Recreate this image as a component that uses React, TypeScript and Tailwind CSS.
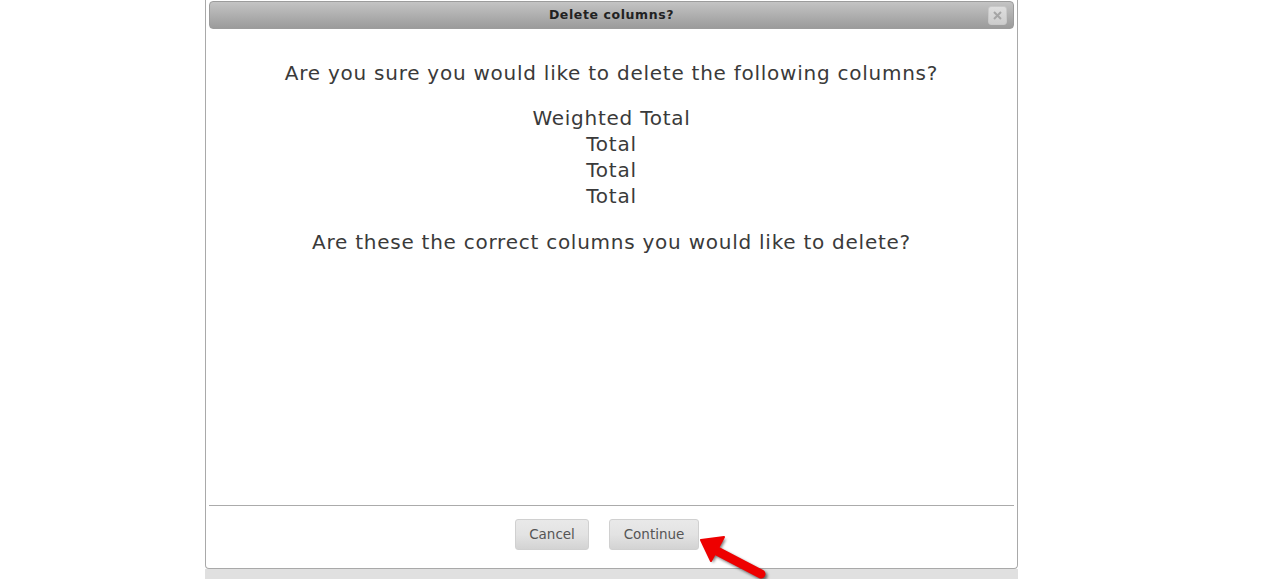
export default function App() {
  const columns = ["Weighted Total", "Total", "Total", "Total"];

  return (
    <div className="relative h-[579px] w-[1262px] overflow-hidden bg-white font-['DejaVu_Sans',Verdana,sans-serif]">
      <div className="ml-[205px] w-[813px]">
        {/* Dialog */}
        <div className="flex h-[569px] flex-col rounded-b-[4px] border border-t-0 border-[#a9a9a9] bg-white px-[3px] pt-px">
          {/* Title bar */}
          <div className="relative flex h-[28px] items-center justify-center rounded-[4px] border border-[#9c9c9c] bg-gradient-to-b from-[#c4c4c4] to-[#9b9b9b]">
            <span className="text-[12.5px] font-bold tracking-[0.6px] text-[#222]">Delete columns?</span>
            <button className="absolute right-[6px] top-[4px] flex h-[19px] w-[19px] items-center justify-center rounded-[3px] border border-[#c8c8c8] bg-gradient-to-b from-[#dedede] to-[#cdcdcd] text-[#a5a5a5]">
              <svg width="9" height="9" viewBox="0 0 9 9">
                <path d="M1 1L8 8M8 1L1 8" stroke="currentColor" strokeWidth="2" />
              </svg>
            </button>
          </div>

          {/* Body */}
          <div className="flex flex-1 flex-col items-center pt-[31px] text-[20px] leading-[26px] tracking-[0.75px] text-[#3a3a3a]">
            <p>Are you sure you would like to delete the following columns?</p>
            <div className="mt-[19px] flex flex-col items-center">
              {columns.map((c, i) => (
                <span key={i}>{c}</span>
              ))}
            </div>
            <p className="mt-[20px]">Are these the correct columns you would like to delete?</p>
          </div>

          {/* Footer */}
          <div className="flex h-[63px] items-start justify-center gap-[20px] border-t border-[#ababab] pr-[9px] pt-[13px]">
            <button className="h-[31px] w-[74px] rounded-[3px] border border-[#d0d0d0] bg-gradient-to-b from-[#e9e9e9] via-[#e3e3e3] to-[#d3d3d3] text-[13.5px] text-[#555]">
              Cancel
            </button>
            <button className="h-[31px] w-[90px] rounded-[3px] border border-[#d0d0d0] bg-gradient-to-b from-[#e9e9e9] via-[#e3e3e3] to-[#d3d3d3] text-[13.5px] text-[#555]">
              Continue
            </button>
          </div>
        </div>
        <div className="h-[10px] bg-[#e0e0e0]" />
      </div>

      {/* Red annotation arrow */}
      <svg
        className="absolute left-[695px] top-[530px]"
        width="80"
        height="49"
        viewBox="0 0 80 49"
      >
        <defs>
          <filter id="sh" x="-20%" y="-20%" width="140%" height="140%">
            <feGaussianBlur stdDeviation="1.5" />
          </filter>
        </defs>
        <g transform="translate(2 2)" opacity="0.55" filter="url(#sh)">
          <path d="M20 20L66 44" stroke="#000" strokeWidth="9" strokeLinecap="round" />
          <path d="M6 10L29 7L16 31Z" fill="#000" />
        </g>
        <path d="M20 20L66 44" stroke="#ee0000" strokeWidth="9" strokeLinecap="round" />
        <path d="M6 10L29 7L16 31Z" fill="#ee0000" stroke="#ee0000" strokeWidth="2" strokeLinejoin="round" />
      </svg>
    </div>
  );
}
